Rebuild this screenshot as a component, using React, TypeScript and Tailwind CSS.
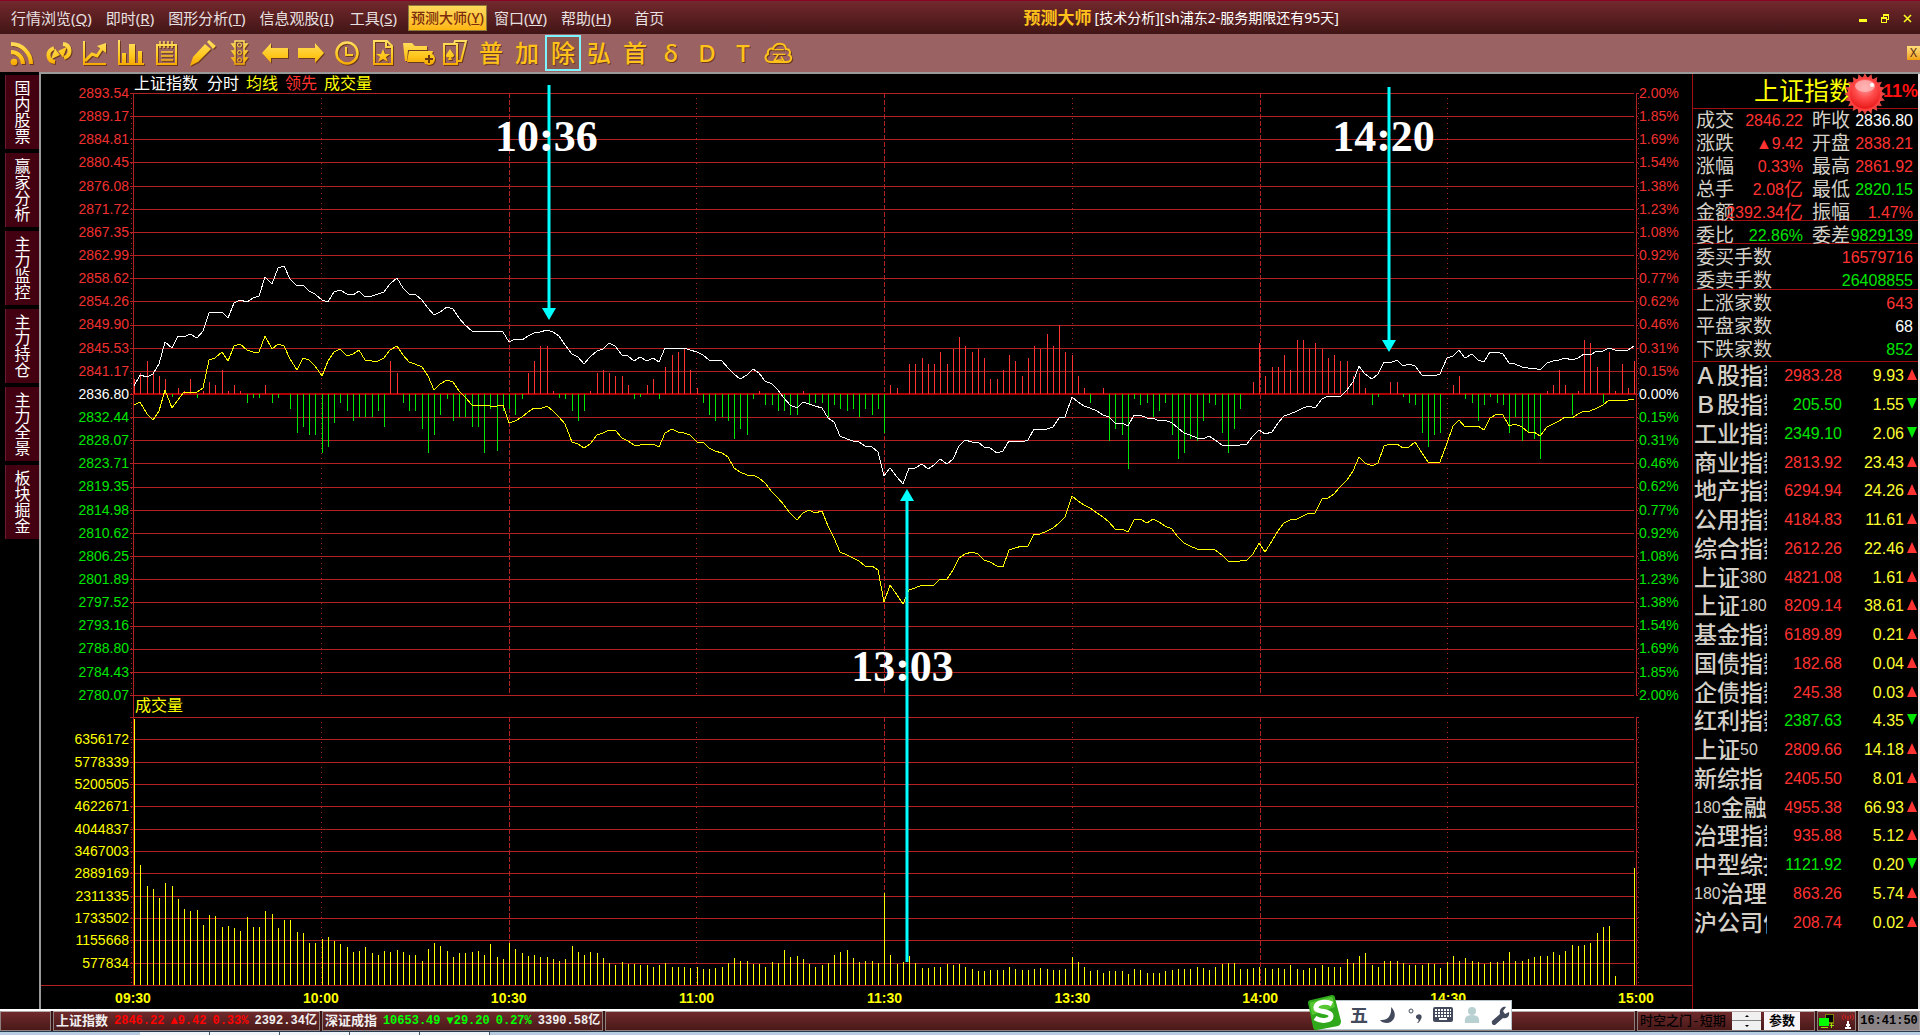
import React from "react";
import clsx from "clsx";

const PLOT_W = 1503;
const PRICE_H = 602;
const VOLUME_H = 268;
const ZERO = 301;

const priceLabels = [
  "2893.54", "2889.17", "2884.81", "2880.45", "2876.08", "2871.72", "2867.35", "2862.99", "2858.62",
  "2854.26", "2849.90", "2845.53", "2841.17", "2836.80", "2832.44", "2828.07", "2823.71", "2819.35",
  "2814.98", "2810.62", "2806.25", "2801.89", "2797.52", "2793.16", "2788.80", "2784.43", "2780.07",
];
const percentLabels = [
  "2.00%", "1.85%", "1.69%", "1.54%", "1.38%", "1.23%", "1.08%", "0.92%", "0.77%",
  "0.62%", "0.46%", "0.31%", "0.15%", "0.00%", "0.15%", "0.31%", "0.46%", "0.62%",
  "0.77%", "0.92%", "1.08%", "1.23%", "1.38%", "1.54%", "1.69%", "1.85%", "2.00%",
];
const volumeLabels = [
  "", "6356172", "5778339", "5200505", "4622671", "4044837", "3467003", "2889169", "2311335",
  "1733502", "1155668", "577834", "",
];
const times = ["09:30", "10:00", "10:30", "11:00", "11:30", "13:30", "14:00", "14:30", "15:00"];

// one value per minute, 09:30 - 15:00, relative to yesterday's close
const price = [
  8, 19, 17, 20, 30, 52, 46, 58, 57, 60, 56, 63, 81, 82, 82, 76, 91, 94, 92, 96, 98, 117, 110, 126, 128,
  115, 108, 109, 103, 100, 94, 92, 102, 104, 100, 99, 103, 97, 98, 100, 102, 110, 116, 106, 100, 100, 94,
  86, 79, 82, 87, 85, 76, 69, 63, 62, 63, 62, 63, 62, 52, 55, 54, 58, 61, 62, 64, 62, 58, 49, 40, 37, 30,
  37, 43, 45, 51, 48, 39, 38, 33, 37, 33, 36, 32, 46, 46, 46, 46, 44, 42, 39, 34, 34, 33, 26, 20, 15, 19,
  25, 21, 13, 10, 4, -4, -11, -14, -8, -10, -12, -14, -24, -28, -42, -45, -47, -48, -52, -53, -58, -82,
  -74, -83, -90, -74, -74, -70, -75, -71, -65, -70, -65, -52, -46, -48, -48, -53, -54, -59, -57, -47, -47,
  -48, -46, -35, -36, -35, -33, -24, -23, -3, -8, -12, -14, -17, -21, -23, -29, -29, -32, -21, -21, -24,
  -24, -27, -26, -29, -34, -39, -41, -44, -45, -42, -46, -51, -52, -51, -51, -50, -42, -36, -40, -38, -29,
  -22, -20, -17, -14, -12, -14, -5, -2, -2, -3, 4, 12, 28, 20, 15, 20, 32, 31, 34, 28, 30, 28, 19, 19, 18,
  20, 36, 38, 44, 36, 40, 34, 32, 42, 42, 40, 31, 30, 27, 26, 26, 24, 31, 33, 34, 36, 34, 36, 40, 39, 43,
  43, 46, 44, 44, 44, 48,
];
const average = [
  -11, -8, -20, -26, -17, 4, -14, -6, 2, 2, 2, 6, 34, 36, 42, 33, 48, 50, 44, 42, 42, 58, 45, 50, 48, 35,
  24, 36, 34, 28, 18, 33, 42, 45, 38, 40, 44, 34, 33, 33, 36, 44, 48, 39, 32, 30, 27, 18, 4, 10, 14, 12,
  3, -3, -11, -12, -11, -12, -12, -11, -29, -27, -23, -18, -14, -15, -12, -17, -23, -30, -48, -50, -54,
  -50, -41, -39, -36, -36, -44, -47, -51, -51, -50, -50, -53, -39, -35, -38, -39, -41, -48, -48, -54, -57,
  -59, -63, -74, -78, -81, -81, -84, -89, -98, -104, -111, -119, -126, -119, -116, -119, -117, -132, -144,
  -158, -161, -164, -167, -172, -172, -176, -208, -191, -201, -210, -196, -194, -191, -192, -191, -185,
  -185, -176, -164, -160, -158, -160, -166, -168, -172, -173, -156, -154, -152, -152, -140, -140, -137,
  -134, -129, -123, -102, -107, -111, -114, -119, -123, -128, -135, -135, -138, -126, -125, -129, -125,
  -128, -132, -135, -143, -149, -152, -155, -155, -155, -156, -161, -167, -167, -167, -166, -160, -149,
  -158, -147, -137, -129, -126, -125, -122, -119, -119, -105, -104, -100, -93, -86, -77, -63, -69, -72,
  -69, -52, -50, -50, -54, -53, -48, -59, -68, -68, -68, -49, -32, -26, -33, -32, -32, -36, -24, -20, -21,
  -32, -30, -33, -38, -38, -42, -33, -30, -27, -23, -24, -20, -17, -17, -14, -11, -6, -6, -6, -6, -5,
];
const momentum = [
  15, 21, 33, 21, 18, 15, -3, 6, 3, 15, -4, 3, 12, 9, 24, 3, 9, 3, -9, -4, -4, 9, -9, -4, 0, -15, -39,
  -33, -41, -41, -59, -53, -29, -9, -17, -27, -23, -23, -23, -17, -33, 33, 21, -9, -17, -17, -35, -59, -41,
  -21, -5, -27, -23, -23, -33, -33, -59, -15, -57, -17, -15, -21, -5, 21, 33, 48, 48, 3, -4, -5, -17, -27,
  -17, 3, 21, 24, 21, 18, 18, 9, -5, -3, 9, 15, -5, 27, 39, 42, 45, 24, 6, -9, -21, -27, -23, -27, -45,
  -35, -41, -5, 3, -11, -11, -17, -17, -21, -21, 3, -11, -9, -9, -23, -11, -15, -17, -15, -23, -15, -21,
  -15, -39, 9, 6, 0, 30, 30, 36, 30, 30, 42, 30, 45, 57, 48, 42, 45, 36, 15, 15, 24, 39, 33, 18, 36, 48,
  45, 60, 48, 69, 42, 39, 18, 6, -9, 0, 6, -47, -35, -41, -75, -5, -11, -9, -23, -17, -9, -41, -65, -59,
  -45, -47, -27, -9, -11, -39, -59, -35, -15, 0, 12, 51, 18, 27, 27, 39, 24, 54, 54, 45, 51, 45, 36, 39,
  33, 33, 18, 21, 6, -11, -3, 0, 12, 12, -3, -9, -11, -39, -53, -41, -39, 0, 9, 18, -5, -9, -27, -11, -3,
  -9, -11, -39, -23, -47, -39, -45, -65, 3, 9, 24, 9, -21, 3, 54, 51, 27, -9, 42, 3, 30, 6, 33,
];
const volume = [
  266, 120, 99, 96, 87, 102, 99, 86, 76, 74, 75, 60, 70, 69, 58, 59, 57, 54, 68, 58, 58, 74, 71, 57, 65,
  65, 53, 52, 42, 42, 46, 48, 44, 41, 38, 33, 34, 38, 32, 30, 34, 33, 35, 33, 30, 30, 24, 36, 42, 39, 34,
  28, 32, 32, 33, 34, 30, 41, 28, 26, 42, 36, 32, 29, 30, 28, 28, 26, 24, 26, 39, 33, 30, 33, 32, 27, 22,
  20, 23, 21, 21, 20, 20, 18, 20, 22, 18, 18, 18, 17, 18, 16, 16, 17, 18, 22, 27, 24, 24, 21, 21, 18, 23,
  22, 35, 28, 29, 26, 21, 18, 20, 22, 30, 33, 35, 27, 23, 24, 24, 22, 92, 30, 21, 23, 29, 22, 17, 17, 18,
  18, 21, 20, 21, 18, 16, 14, 14, 15, 15, 15, 18, 16, 15, 15, 16, 17, 16, 15, 15, 16, 28, 23, 18, 14, 15,
  12, 14, 14, 14, 11, 16, 15, 12, 12, 12, 14, 15, 16, 16, 16, 18, 17, 15, 18, 21, 22, 22, 16, 16, 17, 18,
  17, 16, 17, 16, 20, 16, 15, 17, 17, 20, 18, 18, 18, 26, 22, 29, 32, 20, 18, 24, 24, 24, 22, 20, 20, 20,
  22, 21, 17, 23, 29, 24, 27, 24, 23, 21, 23, 23, 24, 33, 24, 24, 26, 28, 29, 29, 33, 30, 34, 40, 39, 40,
  42, 52, 58, 59, 9, 0, 0, 117,
];

type Tone = "r" | "g" | "w";
const toneClass: Record<Tone, string> = { r: "text-[#ff3232]", g: "text-[#00e600]", w: "text-white" };

const quotes: [string, string, Tone, string, string, Tone][] = [
  ["成交", "2846.22", "r", "昨收", "2836.80", "w"],
  ["涨跌", "▲9.42", "r", "开盘", "2838.21", "r"],
  ["涨幅", "0.33%", "r", "最高", "2861.92", "r"],
  ["总手", "2.08亿", "r", "最低", "2820.15", "g"],
  ["金额", "2392.34亿", "r", "振幅", "1.47%", "r"],
];

const indices: [string, string, string, boolean][] = [
  ["Ａ股指数", "2983.28", "9.93", true],
  ["Ｂ股指数", "205.50", "1.55", false],
  ["工业指数", "2349.10", "2.06", false],
  ["商业指数", "2813.92", "23.43", true],
  ["地产指数", "6294.94", "24.26", true],
  ["公用指数", "4184.83", "11.61", true],
  ["综合指数", "2612.26", "22.46", true],
  ["上证380", "4821.08", "1.61", true],
  ["上证180", "8209.14", "38.61", true],
  ["基金指数", "6189.89", "0.21", true],
  ["国债指数", "182.68", "0.04", true],
  ["企债指数", "245.38", "0.03", true],
  ["红利指数", "2387.63", "4.35", false],
  ["上证50", "2809.66", "14.18", true],
  ["新综指", "2405.50", "8.01", true],
  ["180金融", "4955.38", "66.93", true],
  ["治理指数", "935.88", "5.12", true],
  ["中型综指", "1121.92", "0.20", false],
  ["180治理", "863.26", "5.74", true],
  ["沪公司债", "208.74", "0.02", true],
];

const minuteX = (m: number) => Math.round(m * 6.25) + 1;
const toPoints = (data: number[]) => data.map((v, m) => `${minuteX(m)},${ZERO - v}`).join(" ");

const Key = ({ children }: { children: string }) => (
  <span>
    (<u>{children}</u>)
  </span>
);

const MenuItem = ({ label, hotkey, className }: { label: string; hotkey?: string; className?: string }) => (
  <button className={clsx("px-[7px] text-[15px] leading-6 whitespace-nowrap text-[#e8e0e0]", className)}>
    {label}
    {hotkey && <Key>{hotkey}</Key>}
  </button>
);

const MenuBar = () => (
  <header className="flex h-[34px] items-center border-t border-[#8a0424] bg-linear-to-b from-[#73292d] to-[#421516]">
    <nav className="flex w-[53%] shrink-0 items-center pl-1">
      <MenuItem label="行情浏览" hotkey="Q" />
      <MenuItem label="即时" hotkey="R" />
      <MenuItem label="图形分析" hotkey="T" />
      <MenuItem label="信息观股" hotkey="I" />
      <MenuItem label="工具" hotkey="S" className="ml-[2px]" />
      <button className="ml-1 h-[26px] w-[79px] border border-[#8d7c3c] bg-linear-to-b from-[#ffd95a] to-[#ffb70c] text-sm font-medium whitespace-nowrap text-[#7a2c0c]">
        预测大师<Key>Y</Key>
      </button>
      <MenuItem label="窗口" hotkey="W" />
      <MenuItem label="帮助" hotkey="H" />
      <MenuItem label="首页" className="ml-[9px]" />
    </nav>
    <h1 className="flex items-center gap-[3px] pl-[6px] whitespace-nowrap">
      <span className="text-[17px] font-bold text-[#ffc21a]">预测大师</span>
      <span className="text-sm text-white">[技术分析][sh浦东2-服务期限还有95天]</span>
    </h1>
    <div className="ml-auto flex items-center gap-3 pr-2 text-[#ffff20]">
      <button aria-label="最小化">
        <svg width="10" height="10" fill="currentColor">
          <rect x="1" y="6" width="8" height="3" />
        </svg>
      </button>
      <button aria-label="还原">
        <svg width="10" height="10" fill="none" stroke="currentColor" shapeRendering="crispEdges">
          <path d="M1 4h5v5h-5zM1 5h5M3 4V1h5v5h-2M3 2h5" />
        </svg>
      </button>
      <button aria-label="关闭">
        <svg width="10" height="10" stroke="currentColor" strokeWidth="1.5">
          <path d="M2 2l7 7M9 2l-7 7" />
        </svg>
      </button>
    </div>
  </header>
);

const iconShapes: Record<string, React.ReactNode> = {
  订阅: (
    <>
      <circle cx="4" cy="22" r="3" fill="url(#gold)" />
      <path d="M1 12a12 12 0 0 1 12 12M1 4a20 20 0 0 1 20 20" strokeWidth="4" />
    </>
  ),
  刷新: (
    <>
      <path d="M9 22C1 21 0 11 8 8M17 4c8 1 9 11 1 14" strokeWidth="4" />
      <path d="M3 11l11-4-2 8zM23 15l-11 4 2-8z" fill="url(#gold)" stroke="none" transform="rotate(-50 13 13)" />
    </>
  ),
  走势: (
    <>
      <path d="M2 1v23h22" strokeWidth="2" />
      <path d="M3 21l7-7 5 2 6-9" strokeWidth="3" />
      <path d="M15 6l9-3v10z" fill="url(#gold)" stroke="none" />
    </>
  ),
  柱图: (
    <>
      <path d="M1 0v24h25" strokeWidth="2" />
      <path d="M4 13h4v10h-4zM11 4h6v19h-6zM20 11h4v12h-4z" fill="url(#gold)" stroke="none" />
    </>
  ),
  记事: (
    <>
      <path d="M3 5h19v19H3z" strokeWidth="2" />
      <path d="M6 1v7M10 1v7M14 1v7M18 1v7M7 12h12M7 16h12M7 20h12" strokeWidth="1.5" />
    </>
  ),
  画线: <path d="M0 26l3-9L15 4l6 5L8 22zM17 2l2-2 7 6-3 3z" fill="url(#gold)" stroke="none" />,
  信号灯: (
    <>
      <path d="M9 1h9v23H9zM9 4H6l3 4M9 11H6l3 4M9 18H6l3 4M18 4h3l-3 4M18 11h3l-3 4M18 18h3l-3 4" strokeWidth="1.5" />
      <circle cx="13.500" cy="5" r="2" />
      <circle cx="13.500" cy="12.500" r="2" />
      <circle cx="13.500" cy="20" r="2" />
    </>
  ),
  后退: <path d="M0 13L9 3v5h17v10H9v5z" fill="url(#gold)" stroke="none" />,
  前进: <path d="M26 13L17 3v5H0v10h17v5z" fill="url(#gold)" stroke="none" />,
  周期: (
    <>
      <circle cx="13" cy="13" r="10.500" strokeWidth="2.500" />
      <path d="M12 7v8h7" strokeWidth="2" />
    </>
  ),
  自选: (
    <>
      <path d="M4 1h13l5 5v18H4zM16 1v6h6" strokeWidth="2" />
      <path d="M13 9l2 5h5l-4 3 2 5-5-3-5 3 2-5-4-3h5z" fill="url(#gold)" stroke="none" />
    </>
  ),
  新建板块: (
    <>
      <path d="M-3 3h9l3 3h12v4H2l-1 11h-2zM3 11h24l-3 11H1z" fill="url(#gold)" stroke="none" />
      <circle cx="23" cy="19" r="6" fill="url(#gold)" stroke="none" />
      <path d="M23 15v8M19 19h8" stroke="#6b3a12" strokeWidth="2" />
    </>
  ),
  组合: (
    <>
      <path d="M2 4h13v20H2zM12 4l1-3h11l-5 20h-3" strokeWidth="2" />
      <path d="M8 9l4 6c0 2-2 3-3 2l1 3H6l1-3c-2 1-3 0-3-2z" fill="url(#gold)" stroke="none" />
    </>
  ),
};

const toolText = ["普", "加", "除", "弘", "首", "δ", "D", "T"];

const ToolBar = () => (
  <div className="flex h-[38px] items-center bg-[#9b6264] pl-[5px]">
    <svg width="0" height="0" className="absolute">
      <linearGradient id="gold" x1="0" y1="0" x2="0" y2="26" gradientUnits="userSpaceOnUse">
        <stop offset="0" stopColor="#ffe067" />
        <stop offset="0.6" stopColor="#ffc81e" />
        <stop offset="1" stopColor="#f5a300" />
      </linearGradient>
    </svg>
    {Object.entries(iconShapes).map(([name, shape]) => (
      <button key={name} aria-label={name} className="flex w-9 justify-center drop-shadow-[1px_1px_0_#6b3a20]">
        <svg width="26" height="26" viewBox="0 0 26 26" fill="none" stroke="url(#gold)" className="overflow-visible">
          {shape}
        </svg>
      </button>
    ))}
    {toolText.map((t) => (
      <button
        key={t}
        className={clsx(
          "flex h-9 w-9 items-center justify-center text-2xl leading-none font-medium text-[#ffc21a] text-shadow-[1px_1px_0_#6b3a20]",
          t === "除" && "border-2 border-[#7df3ff] bg-[#8e5a50]",
        )}
      >
        {t}
      </button>
    ))}
    <button className="relative flex h-9 w-9 items-center justify-center text-sm leading-none font-medium text-[#ffc21a] drop-shadow-[1px_1px_0_#6b3a20]">
      <svg width="30" height="26" viewBox="0 0 30 26" fill="none" stroke="#ffc21a" strokeWidth="2" className="absolute">
        <path d="M7 22c-6 0-7-6-3-8-1-5 3-6 5-5 2-7 12-7 13 0 4 0 5 4 3 6 4 2 2 7-2 7z" />
      </svg>
      <span className="pt-1">云</span>
    </button>
    <button className="ml-auto h-[14px] w-[13px] bg-linear-to-b from-[#ffe07a] to-[#f0a000] text-xs leading-[14px] text-[#5a2a10]">
      X
    </button>
  </div>
);

const sideTabs = ["国内股票", "赢家分析", "主力监控", "主力持仓", "主力全景", "板块掘金"];

const SideTabs = () => (
  <aside className="flex w-[39px] shrink-0 flex-col gap-1 pt-[3px] pl-[5px]">
    {sideTabs.map((tab) => (
      <button
        key={tab}
        className="flex h-[74px] items-center justify-center border-l border-[#6b1a35] bg-[#420010] px-2 text-base leading-4 text-white"
      >
        <span className="w-4 break-all">{tab}</span>
      </button>
    ))}
  </aside>
);

const AxisLabels = ({ labels, className, tone }: { labels: string[]; className: string; tone?: string }) => (
  <div className={clsx("flex shrink-0 flex-col justify-between text-sm", className)}>
    {labels.map((label, i) => (
      <span
        key={i}
        className={clsx("flex h-0 items-center", tone ?? (i < 13 ? "text-[#ef3030]" : i > 13 ? "text-[#00e600]" : "text-white"))}
      >
        {label}
      </span>
    ))}
  </div>
);

const Grid = ({ rows, height }: { rows: number; height: number }) => (
  <g stroke="#b22222" shapeRendering="crispEdges">
    {Array.from({ length: rows + 1 }, (_, i) => {
      const y = Math.round((i * height) / rows);
      return <path key={i} d={`M-3 ${y}H${PLOT_W - 2}M${PLOT_W} ${y}h2`} />;
    })}
    {times.slice(1, -1).map((time, i) => (
      <path
        key={time}
        d={`M${Math.round((i + 1) * 187.75)} 0V${height}`}
        strokeDasharray={["10:30", "11:30", "14:00"].includes(time) ? "5 2" : "1 4"}
      />
    ))}
    <path d={`M0 0V${height}M${PLOT_W} 0V${height}`} />
    <path d={`M-2 0V${height}M${PLOT_W + 2} 0V${height}`} strokeDasharray="1 4" />
  </g>
);

const Note = ({ children, className }: { children: string; className: string }) => (
  <span className={clsx("absolute -translate-x-1/2 font-['Liberation_Serif'] text-[44px] leading-none font-bold text-white", className)}>
    {children}
  </span>
);

const PricePlot = () => (
  <div className="relative z-10 flex-1">
    <svg
      viewBox={`0 0 ${PLOT_W} ${PRICE_H}`}
      preserveAspectRatio="none"
      className="block h-[602px] w-full overflow-visible"
      fill="none"
    >
      <Grid rows={26} height={PRICE_H} />
      <path d={`M0 ${ZERO}H${PLOT_W}`} stroke="#b00000" strokeWidth="2" shapeRendering="crispEdges" />
      <g shapeRendering="crispEdges">
        {momentum.map(
          (v, m) => v !== 0 && <path key={m} d={`M${minuteX(m)} ${ZERO}v${-v}`} stroke={v > 0 ? "#ff3232" : "#00e600"} />,
        )}
        <polyline points={toPoints(average)} stroke="#ffff00" />
        <polyline points={toPoints(price)} stroke="#ffffff" />
      </g>
      {/* turning points */}
      <g stroke="#00ffff" strokeWidth="3">
        <path d="M416 -8V217M1256 -6V249M774 406V869" />
        <g fill="#00ffff" stroke="none">
          <path d="M409 215h14l-7 12zM1249 247h14l-7 12zM767 408h14l-7 -12z" />
        </g>
      </g>
    </svg>
    <Note className="top-[22px] left-[27.5%]">10:36</Note>
    <Note className="top-[22px] left-[83.2%]">14:20</Note>
    <Note className="top-[552px] left-[51.2%]">13:03</Note>
  </div>
);

const Chart = () => (
  <main className="min-w-0 flex-1 border-l-2 border-[#9a9a9a] font-['Liberation_Sans','Noto_Sans_CJK_SC',sans-serif]">
    <h2 className="flex h-[19px] items-start gap-[7px] pl-[93px] text-base leading-5 whitespace-nowrap text-white">
      <span className="pr-[2px]">上证指数</span>
      <span>分时</span>
      <span className="text-[#ffff00]">均线</span>
      <span className="text-[#ff3232]">领先</span>
      <span className="text-[#ffff00]">成交量</span>
    </h2>
    <section className="flex">
      <AxisLabels labels={priceLabels} className="w-[92px] items-end pr-1" />
      <PricePlot />
      <AxisLabels labels={percentLabels} className="w-14 items-start pl-[3px]" />
    </section>
    <h3 className="ml-[92px] h-[22px] border-l border-[#b22222] pl-[1px] text-base leading-[22px] text-[#ffff00]">成交量</h3>
    <section className="flex">
      <AxisLabels labels={volumeLabels} className="w-[92px] items-end pr-1" tone="text-[#ffff00]" />
      <svg
        viewBox={`0 0 ${PLOT_W} ${VOLUME_H}`}
        preserveAspectRatio="none"
        className="block h-[268px] min-w-0 flex-1 overflow-visible"
      >
        <Grid rows={12} height={VOLUME_H} />
        <g stroke="#ffff00" shapeRendering="crispEdges">
          {volume.map((v, m) => (
            <path key={m} d={`M${minuteX(m)} ${VOLUME_H}v${-v}`} />
          ))}
        </g>
      </svg>
      <div className="w-14 shrink-0" />
    </section>
    <div className="flex h-6 items-center justify-between border-t border-[#b22222] pr-14 pl-[92px] text-sm font-bold text-[#ffff00]">
      {times.map((time) => (
        <span key={time} className="flex w-0 justify-center">
          {time}
        </span>
      ))}
    </div>
  </main>
);

const Sun = () => (
  <svg width="44" height="44" viewBox="-22 -22 44 44" className="absolute top-[-2px] right-[31px]">
    <defs>
      <radialGradient id="sun" cx="0.5" cy="0.3" r="0.7">
        <stop offset="0" stopColor="#ff9c9c" />
        <stop offset="0.5" stopColor="#ff4a4a" />
        <stop offset="1" stopColor="#e81818" />
      </radialGradient>
    </defs>
    {Array.from({ length: 20 }, (_, i) => (
      <path key={i} d="M-3 -15L0 -21L3 -15z" fill="#e04a44" transform={`rotate(${i * 18})`} />
    ))}
    <circle r="17" fill="#ff4040" />
    <circle r="15" fill="url(#sun)" />
    <ellipse cx="0" cy="-8" rx="10" ry="6" fill="#ffc0c0" opacity="0.7" />
    <circle cx="7" cy="-9" r="2" fill="#fff" />
  </svg>
);

const Stat = ({ label, value, tone }: { label: string; value: string; tone: Tone }) => (
  <div className="relative flex h-[23px] items-center justify-between whitespace-nowrap">
    <dt className="text-[19px] leading-[23px] text-[#d4d0c8]">{label}</dt>
    <dd className={clsx("absolute right-0 flex items-center text-base leading-[23px]", toneClass[tone])}>
      {value.replace("亿", "")}
      {value.endsWith("亿") && <span className="text-[19px] leading-[23px]">亿</span>}
    </dd>
  </div>
);

const QuotePanel = () => (
  <aside className="w-[228px] shrink-0 border-r-2 border-l border-r-[#e8e8e8] border-l-[#a01010] font-['Liberation_Sans','Noto_Sans_CJK_SC',sans-serif]">
    <div className="relative flex h-[35px] items-center justify-end border-b border-[#a01010]">
      <h2 className="text-[25px] leading-none whitespace-nowrap text-[#ffff00]">上证指数</h2>
      <span className="w-[64px] text-right text-lg font-bold text-[#ff1010]">-0.11%</span>
      <Sun />
    </div>
    <dl className="h-28 border-b border-[#a01010] pr-[5px] pl-[3px]">
      {quotes.map(([a, av, at, b, bv, bt]) => (
        <div key={a} className="grid grid-cols-[107px_1fr] gap-[9px]">
          <Stat label={a} value={av} tone={at} />
          <Stat label={b} value={bv} tone={bt} />
        </div>
      ))}
    </dl>
    <dl className="grid h-[23px] grid-cols-[107px_1fr] gap-[9px] border-b border-[#a01010] pt-[3px] pr-[5px] pl-[3px]">
      <Stat label="委比" value="22.86%" tone="g" />
      <Stat label="委差" value="9829139" tone="g" />
    </dl>
    <dl className="h-[46px] border-b border-[#a01010] pt-[2px] pr-[5px] pl-[3px]">
      <Stat label="委买手数" value="16579716" tone="r" />
      <Stat label="委卖手数" value="26408855" tone="g" />
    </dl>
    <dl className="h-[72px] border-b border-[#a01010] pt-[2px] pr-[5px] pl-[3px]">
      <Stat label="上涨家数" value="643" tone="r" />
      <Stat label="平盘家数" value="68" tone="w" />
      <Stat label="下跌家数" value="852" tone="g" />
    </dl>
    <table className="h-[575px] w-full table-fixed">
      <tbody>
        {indices.map(([name, value, change, up]) => (
          <tr key={name}>
            <th scope="row" className="w-[74px] p-0 pl-[1px] text-left font-medium text-[#d4d0c8]">
              <div className="flex h-7 items-center overflow-hidden text-[23px] leading-7 whitespace-nowrap">
                {name.split(/(\d+)/).map((part, i) => (
                  <span key={i} className={clsx(/\d/.test(part) && "text-base font-normal")}>
                    {part}
                  </span>
                ))}
              </div>
            </th>
            <td className={clsx("w-[75px] p-0 text-right text-base leading-none", up ? "text-[#ff3232]" : "text-[#00e600]")}>
              {value}
            </td>
            <td className="p-0 text-right text-base leading-none text-[#ffff32]">{change}</td>
            <td className="w-[14px] p-0 pb-[3px] pl-[3px]">
              <svg width="10" height="11" fill={up ? "#ff3232" : "#00e600"} className="block">
                <path d={up ? "M5 0L10 11H0z" : "M5 11L10 0H0z"} />
              </svg>
            </td>
          </tr>
        ))}
      </tbody>
    </table>
  </aside>
);

const segment = "flex h-5 items-center border border-[#8f8080] border-t-[#b8a8a8] bg-linear-to-b from-[#702a2c] to-[#4a1919]";

const Ticker = ({ name, last, change, percent, amount, tone }: Record<string, string>) => (
  <div className={clsx(segment, "gap-[6px] px-[2px] text-[#f0f0f0]")}>
    <span className="text-[13px]">{name}</span>
    <span className={tone}>{last}</span>
    <span className={tone}>{change}</span>
    <span className={tone}>{percent}</span>
    <span>{amount}</span>
  </div>
);

const StatusBar = () => (
  <footer className="relative border-t-2 border-white bg-[#3a1414]">
    <div className="flex items-center gap-[2px] font-['Liberation_Mono','Noto_Sans_CJK_SC',monospace] text-xs leading-none font-bold whitespace-nowrap">
      <div className={clsx(segment, "w-[51px]")} />
      <Ticker name="上证指数" last="2846.22" change="▲9.42" percent="0.33%" amount="2392.34亿" tone="text-[#ff0000]" />
      <Ticker name="深证成指" last="10653.49" change="▼29.20" percent="0.27%" amount="3390.58亿" tone="text-[#00ff00]" />
      <div className={clsx(segment, "flex-1")} />
      <div className={clsx(segment, "w-[178px]")}>
        <label htmlFor="period" className="w-[94px] pl-[2px] text-[13px] font-medium text-black">
          时空之门-短期
        </label>
        <span id="period" className="flex flex-col">
          <button aria-label="上一个" className="flex h-[9px] w-[29px] items-center justify-center border-b border-[#808080] bg-[#f0f0f0]">
            <svg width="4" height="2">
              <path d="M2 0L4 2H0z" />
            </svg>
          </button>
          <button aria-label="下一个" className="flex h-[9px] w-[29px] items-center justify-center bg-[#f0f0f0]">
            <svg width="4" height="2">
              <path d="M2 2L4 0H0z" />
            </svg>
          </button>
        </span>
        <button className="ml-[3px] h-[18px] w-9 bg-[#f8f4f8] text-[13px] text-black">参数</button>
      </div>
      <div className={clsx(segment, "w-[39px] justify-center gap-2")}>
        <svg width="15" height="16" shapeRendering="crispEdges">
          <path d="M6 1h9v10H6z" fill="#808000" />
          <path d="M7 2h7v7H7z" fill="#000" />
          <path d="M0 5h10v8H0z" fill="#00ff00" />
          <path d="M2 14h7v1H2zM11 12h4v1h-4zM13 10v5h-1v-5z" fill="#a0e000" />
        </svg>
        <svg width="12" height="16" fill="none" stroke="#e02020">
          <path d="M2 1c-2 2-2 5 0 6M10 1c2 2 2 5 0 6M4 2c-1 1-1 3 0 4M8 2c1 1 1 3 0 4" />
          <path d="M6 3v5" />
          <path d="M6 8v7M3 15h6M4 12h4" stroke="#fff" strokeWidth="2" />
        </svg>
      </div>
      <time className="flex h-5 w-[62px] items-center justify-center border border-[#a8a0a0] bg-[#8a8486] text-black">16:41:50</time>
    </div>
    <div className="flex h-[4px] border-t border-[#2c3a50] bg-[#b9cde2] pl-[140px]">
      {[0, 1, 2, 3, 4].map((i) => (
        <span key={i} className="w-[70px] border-r border-[#4a5a70] bg-[#f2f7fb]" />
      ))}
    </div>
    {/* floating input method bar */}
    <div className="absolute right-[408px] bottom-[5px] flex h-[30px] w-[196px] items-center gap-[11px] border border-[#b8c4cc] bg-white pl-[33px] text-[#434a5c]">
      <svg width="36" height="36" viewBox="0 0 36 36" className="absolute bottom-[-2px] left-[-11px]">
        <path d="M2 8q0-3 3-3l21-5q3 0 3 3l6 23q0 4-3 5L11 35q-3 1-4-3z" fill="#2fa81c" />
        <path d="M4 9q0-2 2-2l19-5q2 0 2 2l2 8L6 20z" fill="#57c832" />
        <path
          d="M26 9c-6-3-15-2-16 3-1 6 15 3 15 9 0 5-10 6-16 2"
          fill="none"
          stroke="#fff"
          strokeWidth="5"
        />
      </svg>
      <button className="text-lg leading-none font-bold">五</button>
      <button aria-label="半角">
        <svg width="18" height="18" fill="currentColor">
          <path d="M12 1c6 5 5 15-4 16-3 0-6-1-7-3 8 1 12-5 11-13z" />
        </svg>
      </button>
      <button aria-label="中文标点">
        <svg width="14" height="18" fill="currentColor">
          <circle cx="3" cy="5" r="2" fill="none" stroke="currentColor" />
          <path d="M9 9c3-2 6 1 4 4-1 2-2 4-4 4 2-2 2-3 1-4-2 0-3-3-1-4z" />
        </svg>
      </button>
      <button aria-label="软键盘">
        <svg width="20" height="18" fill="currentColor">
          <path d="M2 1h16q2 0 2 2v11q0 2-2 2H2q-2 0-2-2V3q0-2 2-2z" />
          <path d="M2 4h16M2 7h16M2 10h16" stroke="#fff" strokeWidth="2" strokeDasharray="2 1" />
          <path d="M6 13h8" stroke="#fff" strokeWidth="2" />
        </svg>
      </button>
      <button aria-label="用户">
        <svg width="16" height="18" fill="#b9d0d2">
          <circle cx="8" cy="5" r="4" />
          <path d="M1 17c-1-6 2-8 7-8s8 2 7 8z" />
        </svg>
      </button>
      <button aria-label="设置">
        <svg width="19" height="19" viewBox="0 0 19 19" fill="currentColor">
          <path d="M1 15l8-7c-1-4 2-8 6-7l-3 4 2 3 4-2c1 5-3 7-6 6l-8 7q-4 0-3-4z" />
        </svg>
      </button>
    </div>
  </footer>
);

const App = () => {
  return (
    <div className="flex min-h-screen flex-col bg-black font-['Noto_Sans','Noto_Sans_CJK_SC',sans-serif]">
      <MenuBar />
      <ToolBar />
      <div className="flex flex-1">
        <SideTabs />
        <div className="flex min-w-0 flex-1 border-t-2 border-[#9a9a9a]">
          <Chart />
          <QuotePanel />
        </div>
      </div>
      <StatusBar />
    </div>
  );
};

export default App;
